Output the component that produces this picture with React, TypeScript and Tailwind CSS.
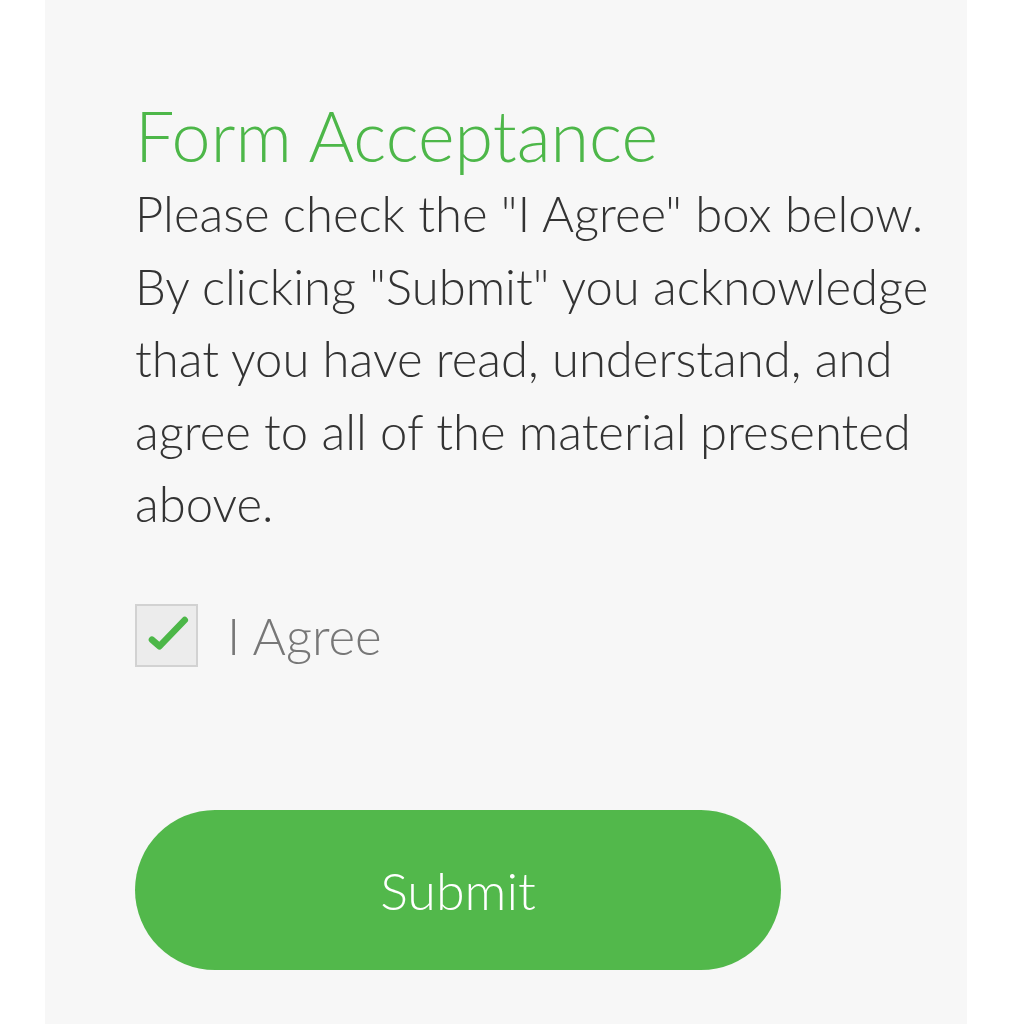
import { useState } from "react";

export default function App() {
  const [agreed, setAgreed] = useState(true);

  return (
    <div className="min-h-screen w-full bg-white flex justify-center font-['Lato',sans-serif]">
      <div className="w-[922px] bg-[#f7f7f7] pl-[90px] pt-[95px] pb-[54px] flex flex-col">
        {/* Heading */}
        <h1 className="text-[70px] leading-[80px] text-[#4db749] font-light">
          Form Acceptance
        </h1>

        {/* Notice */}
        <p className="mt-[2px] text-[49px] leading-[72.5px] text-[#333333] font-light pr-[4px]">
          Please check the "I Agree" box below. By clicking "Submit" you
          acknowledge that you have read, understand, and agree to all of the
          material presented above.
        </p>

        {/* Checkbox */}
        <label className="mt-[64px] flex items-center gap-[29px] cursor-pointer select-none">
          <button
            type="button"
            onClick={() => setAgreed(!agreed)}
            className="w-[63px] h-[63px] border-2 border-[#d2d2d2] bg-[#ececec] flex items-center justify-center"
          >
            {agreed && (
              <svg width="63" height="63" viewBox="0 0 63 63">
                <path
                  d="M16 36 L24 43 L51 15"
                  fill="none"
                  stroke="#4cb748"
                  strokeWidth="7"
                  strokeLinecap="round"
                  strokeLinejoin="round"
                />
              </svg>
            )}
          </button>
          <span className="text-[51px] leading-[63px] text-[#777777] font-light">I Agree</span>
        </label>

        {/* Submit */}
        <button
          type="button"
          className="mt-[143px] w-[646px] h-[160px] rounded-full bg-[#52b84b] text-white text-[52px] font-light flex items-center justify-center"
        >
          Submit
        </button>
      </div>
    </div>
  );
}
